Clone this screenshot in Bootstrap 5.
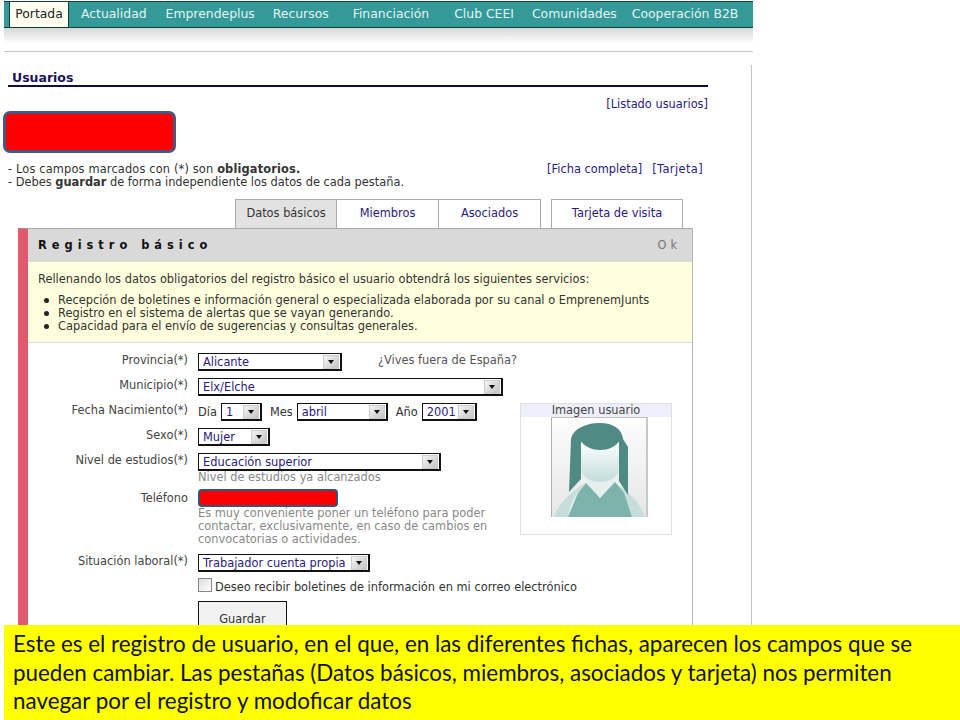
<!DOCTYPE html>
<html lang="es">
<head>
<meta charset="utf-8">
<title>Usuarios</title>
<link href="https://cdn.jsdelivr.net/npm/bootstrap@5.3.0/dist/css/bootstrap.min.css" rel="stylesheet">
<style>
html,body{height:720px;overflow:hidden;background:#fff}
body{font-family:"DejaVu Sans",sans-serif;font-size:11.4px;line-height:13px;color:#333;position:relative}
a{text-decoration:none;color:#2a1a7a}
.shell{width:749px;margin-left:4px;position:relative;height:720px}
.topnav{height:27px;margin-top:1px;background:#339999;border-top:1px solid #12403f;border-bottom:1px solid #12403f;padding-left:5px;font-size:12.4px;align-items:stretch}
.topnav a{color:#e4f4f2;line-height:23px;display:block;white-space:nowrap}
.topnav a.on{background:#fffff2;color:#222;width:60px;text-align:center;border-left:1px solid #12403f;border-right:1px solid #12403f}
.topnav a:nth-child(2){margin-left:12px}
.topnav a:nth-child(3){margin-left:19px}
.topnav a:nth-child(4){margin-left:18px}
.topnav a:nth-child(5){margin-left:24px}
.topnav a:nth-child(6){margin-left:25px}
.topnav a:nth-child(7){margin-left:18px}
.topnav a:nth-child(8){margin-left:15px}
.shade{height:24px;background:linear-gradient(#d8d8d8,#fff 70%);border-bottom:1px solid #c8c8c8}
.body-area{border-right:1px solid #c4c4c4;margin-top:13px;height:570px;margin-right:1px;padding-left:4px}
.title-row{width:700px;height:22px;border-bottom:2px solid #120a4a;padding-left:4px;padding-top:5px;font-weight:700;font-size:12.5px;color:#1a1258;line-height:15px}
.right-links{width:700px;text-align:right;margin-top:11px}
.redbox{width:173px;height:42px;margin-left:-5px;margin-top:0;background:#f00;border:3px solid #47577f;border-radius:7px}
.notes{margin-top:10px;width:695px;white-space:nowrap}
.firstline{letter-spacing:.15px}
.tarj{margin-left:10px;letter-spacing:.4px}
.tabs-row{margin-top:10px;padding-left:227px;height:29px;width:700px}
.tabx{height:29px;width:102px;border:1px solid #aaa;border-bottom:0;border-left-width:0;text-align:center;line-height:26px;background:#fff;color:#2a1a7a;white-space:nowrap}
.tabx.on{background:#e2e2e2;color:#333;border-left-width:1px}
.tabx.far{width:132px;margin-left:10px;border-left-width:1px}
.sheet{width:675px;margin-left:10px;border-left:10px solid #e05a6e;border-right:1px solid #b4b4b4;border-top:1px solid #aaa;height:420px}
.sheet-head{height:33px;background:#d9d9d9;padding:0 11px 0 10px;font-weight:700;letter-spacing:5px;color:#111;align-items:center}
.sheet-head .okay{font-weight:400;color:#777;letter-spacing:4px}
.infobox{height:81px;background:#ffffdd;border-bottom:1px solid #dcdcdc;padding:11px 10px 0}
.infobox ul{margin:8px 0 0;padding-left:20px;list-style:none}
.infobox li::before{content:"";display:inline-block;width:5px;height:5px;border-radius:50%;background:#222;margin-left:-14px;margin-right:9px;vertical-align:1px}
.formwrap{padding-top:10px;position:relative}
.frow{display:flex;min-height:18px;margin-bottom:7px}
.frow.telrow{margin-bottom:8px}
.lab{width:160px;text-align:right;padding-right:0;margin-right:10px;color:#444;flex:none;line-height:14px}
.lab.lower{padding-top:3px}
.pick{height:18px;border:1px solid #111;border-right-width:2px;border-bottom-width:2px;background:#fff;color:#2a1a7a;display:inline-flex;justify-content:space-between;align-items:center;padding-left:4px;padding-top:2px;white-space:nowrap;flex:none}
.pick i{width:16px;height:14px;margin-right:1px;margin-top:-2px;background:linear-gradient(135deg,#f4f4f4,#c4c4c4);border:1px solid #ccc;display:flex;align-items:center;justify-content:center}
.pick i::after{content:"";border:3px solid transparent;border-top:4px solid #111;border-bottom:0}
.w-prov{width:144px}.w-mun{width:305px}.w-dia{width:41px}.w-mes{width:91px}.w-ano{width:55px}.w-sex{width:72px}.w-niv{width:243px}.w-sit{width:172px}
.hint{color:#888;line-height:13px}
.telbar{width:140px;height:18px;margin-top:1px;background:#f00;border:2px solid #2f5680;border-radius:4px}
.datebits{display:flex;align-items:center;gap:4px}
.datebits span{padding-top:1px}
.datebits span.gaplab{margin-left:4px}
.abroad{margin-left:36px;color:#555;padding-top:1px}
.chk{width:14px;height:14px;margin-top:-1px;border:1px solid #888;background:linear-gradient(135deg,#ddd,#fff);flex:none;margin-right:3px}
.chktext{padding-top:2px;margin-bottom:-2px}
.savebtn{width:89px;height:36px;border:1px solid #111;border-radius:0;background:#f2f2f2;color:#333;font-size:11.4px;line-height:13px;padding:0;margin-left:170px;margin-top:4px;display:block}
.photo{position:absolute;left:492px;top:60px;width:152px;height:132px;border:1px solid #e0e0e0}
.photo-cap{background:#efeffb;height:13px;text-align:center;color:#444;line-height:13px}
.photo svg{display:block;margin-left:30px;width:97px;height:100px}
.caption{position:absolute;left:4px;right:0;top:625px;height:95px;background:#ff0;color:#111;font-family:"Lato","Open Sans",sans-serif;font-size:22.4px;line-height:28.7px;padding:5px 0 0 9px;white-space:nowrap}
</style>
</head>
<body>
<div class="shell">
  <nav class="topnav d-flex">
    <a class="on" href="#">Portada</a><a href="#">Actualidad</a><a href="#">Emprendeplus</a><a href="#">Recursos</a><a href="#">Financiación</a><a href="#">Club CEEI</a><a href="#">Comunidades</a><a href="#">Cooperación B2B</a>
  </nav>
  <div class="shade"></div>
  <div class="body-area">
    <div class="title-row">Usuarios</div>
    <div class="right-links"><a href="#">[Listado usuarios]</a></div>
    <div class="redbox"></div>
    <div class="notes d-flex justify-content-between">
      <div><span class="firstline">- Los campos marcados con (*) son <b>obligatorios.</b></span><br>- Debes <b>guardar</b> de forma independiente los datos de cada pestaña.</div>
      <div><a href="#">[Ficha completa]</a><a class="tarj" href="#">[Tarjeta]</a></div>
    </div>
    <div class="tabs-row d-flex">
      <div class="tabx on">Datos básicos</div><div class="tabx"><a href="#">Miembros</a></div><div class="tabx"><a href="#">Asociados</a></div><div class="tabx far"><a href="#">Tarjeta de visita</a></div>
    </div>
    <div class="sheet">
      <div class="sheet-head d-flex justify-content-between"><span>Registro básico</span><span class="okay">Ok</span></div>
      <div class="infobox">
        Rellenando los datos obligatorios del registro básico el usuario obtendrá los siguientes servicios:
        <ul>
          <li>Recepción de boletines e información general o especializada elaborada por su canal o EmprenemJunts</li>
          <li>Registro en el sistema de alertas que se vayan generando.</li>
          <li>Capacidad para el envío de sugerencias y consultas generales.</li>
        </ul>
      </div>
      <div class="formwrap">
        <div class="frow"><div class="lab">Provincia(*)</div><div class="pick w-prov">Alicante<i></i></div><div class="abroad">¿Vives fuera de España?</div></div>
        <div class="frow"><div class="lab">Municipio(*)</div><div class="pick w-mun">Elx/Elche<i></i></div></div>
        <div class="frow"><div class="lab">Fecha Nacimiento(*)</div><div class="datebits"><span>Día</span><div class="pick w-dia">1<i></i></div><span class="gaplab">Mes</span><div class="pick w-mes">abril<i></i></div><span class="gaplab">Año</span><div class="pick w-ano">2001<i></i></div></div></div>
        <div class="frow"><div class="lab">Sexo(*)</div><div class="pick w-sex">Mujer<i></i></div></div>
        <div class="frow mb-1"><div class="lab">Nivel de estudios(*)</div><div><div class="pick w-niv">Educación superior<i></i></div><div class="hint">Nivel de estudios ya alcanzados</div></div></div>
        <div class="frow telrow"><div class="lab lower">Teléfono</div><div><div class="telbar"></div><div class="hint">Es muy conveniente poner un teléfono para poder<br>contactar, exclusivamente, en caso de cambios en<br>convocatorias o actividades.</div></div></div>
        <div class="frow"><div class="lab">Situación laboral(*)</div><div class="pick w-sit">Trabajador cuenta propia<i></i></div></div>
        <div class="frow mb-0"><div class="lab"></div><div class="chk"></div><div class="chktext">Deseo recibir boletines de información en mi correo electrónico</div></div>
        <button class="savebtn" type="button">Guardar</button>
        <div class="photo">
          <div class="photo-cap">Imagen usuario</div>
          <svg viewBox="0 0 97 100" xmlns="http://www.w3.org/2000/svg" role="img" aria-label="Imagen usuario">
            <defs>
              <linearGradient id="bgf" x1="0" y1="0" x2="0" y2="1"><stop offset="0" stop-color="#fdfdfd"/><stop offset="1" stop-color="#e6e6e6"/></linearGradient>
              <linearGradient id="fc" x1="0" y1="0" x2="0" y2="1"><stop offset="0" stop-color="#ffffff"/><stop offset="1" stop-color="#c3dcdd"/></linearGradient>
            </defs>
            <rect width="97" height="100" fill="url(#bgf)"/>
            <rect x="95" width="2" height="100" fill="#c8c8c8"/>
            <rect width="1" height="100" fill="#b0b0b0"/>
            <rect width="97" height="1" fill="#c0c0c0"/>
            <path d="M3 100C7 88 16 78 34 66L64 66C80 76 90 88 94 100Z" fill="#c6dedb"/>
            <path d="M17 100C19 88 22 78 35 66H64C70 74 78 88 81 100Z" fill="#dff1ef"/>
            <path d="M17 100L27 76L35 66L49 81L64 65L73 76L81 100Z" fill="#7db3ab"/>
            <path d="M35 63L49 81L64 63L49 58Z" fill="#e6eeee"/>
            <path d="M30 24H68V52C68 60 58 65 49 65C40 65 30 60 30 52Z" fill="url(#fc)"/>
            <path d="M20 22C22 12 35 6 49 6C62 6 71 12 72 22L77 30V78L68 64V24H30V62L18 75Z" fill="#508a85"/>
            <path d="M28 22C33 30 42 33 49 33C57 33 65 30 70 22L68 14H30Z" fill="#508a85"/>
          </svg>
        </div>
      </div>
    </div>
  </div>
</div>
<div class="caption">Este es el registro de usuario, en el que, en las diferentes fichas, aparecen los campos que se<br>pueden cambiar. Las pestañas (Datos básicos, miembros, asociados y tarjeta) nos permiten<br>navegar por el registro y modoficar datos</div>
<script src="https://cdn.jsdelivr.net/npm/bootstrap@5.3.0/dist/js/bootstrap.bundle.min.js"></script>
</body>
</html>
